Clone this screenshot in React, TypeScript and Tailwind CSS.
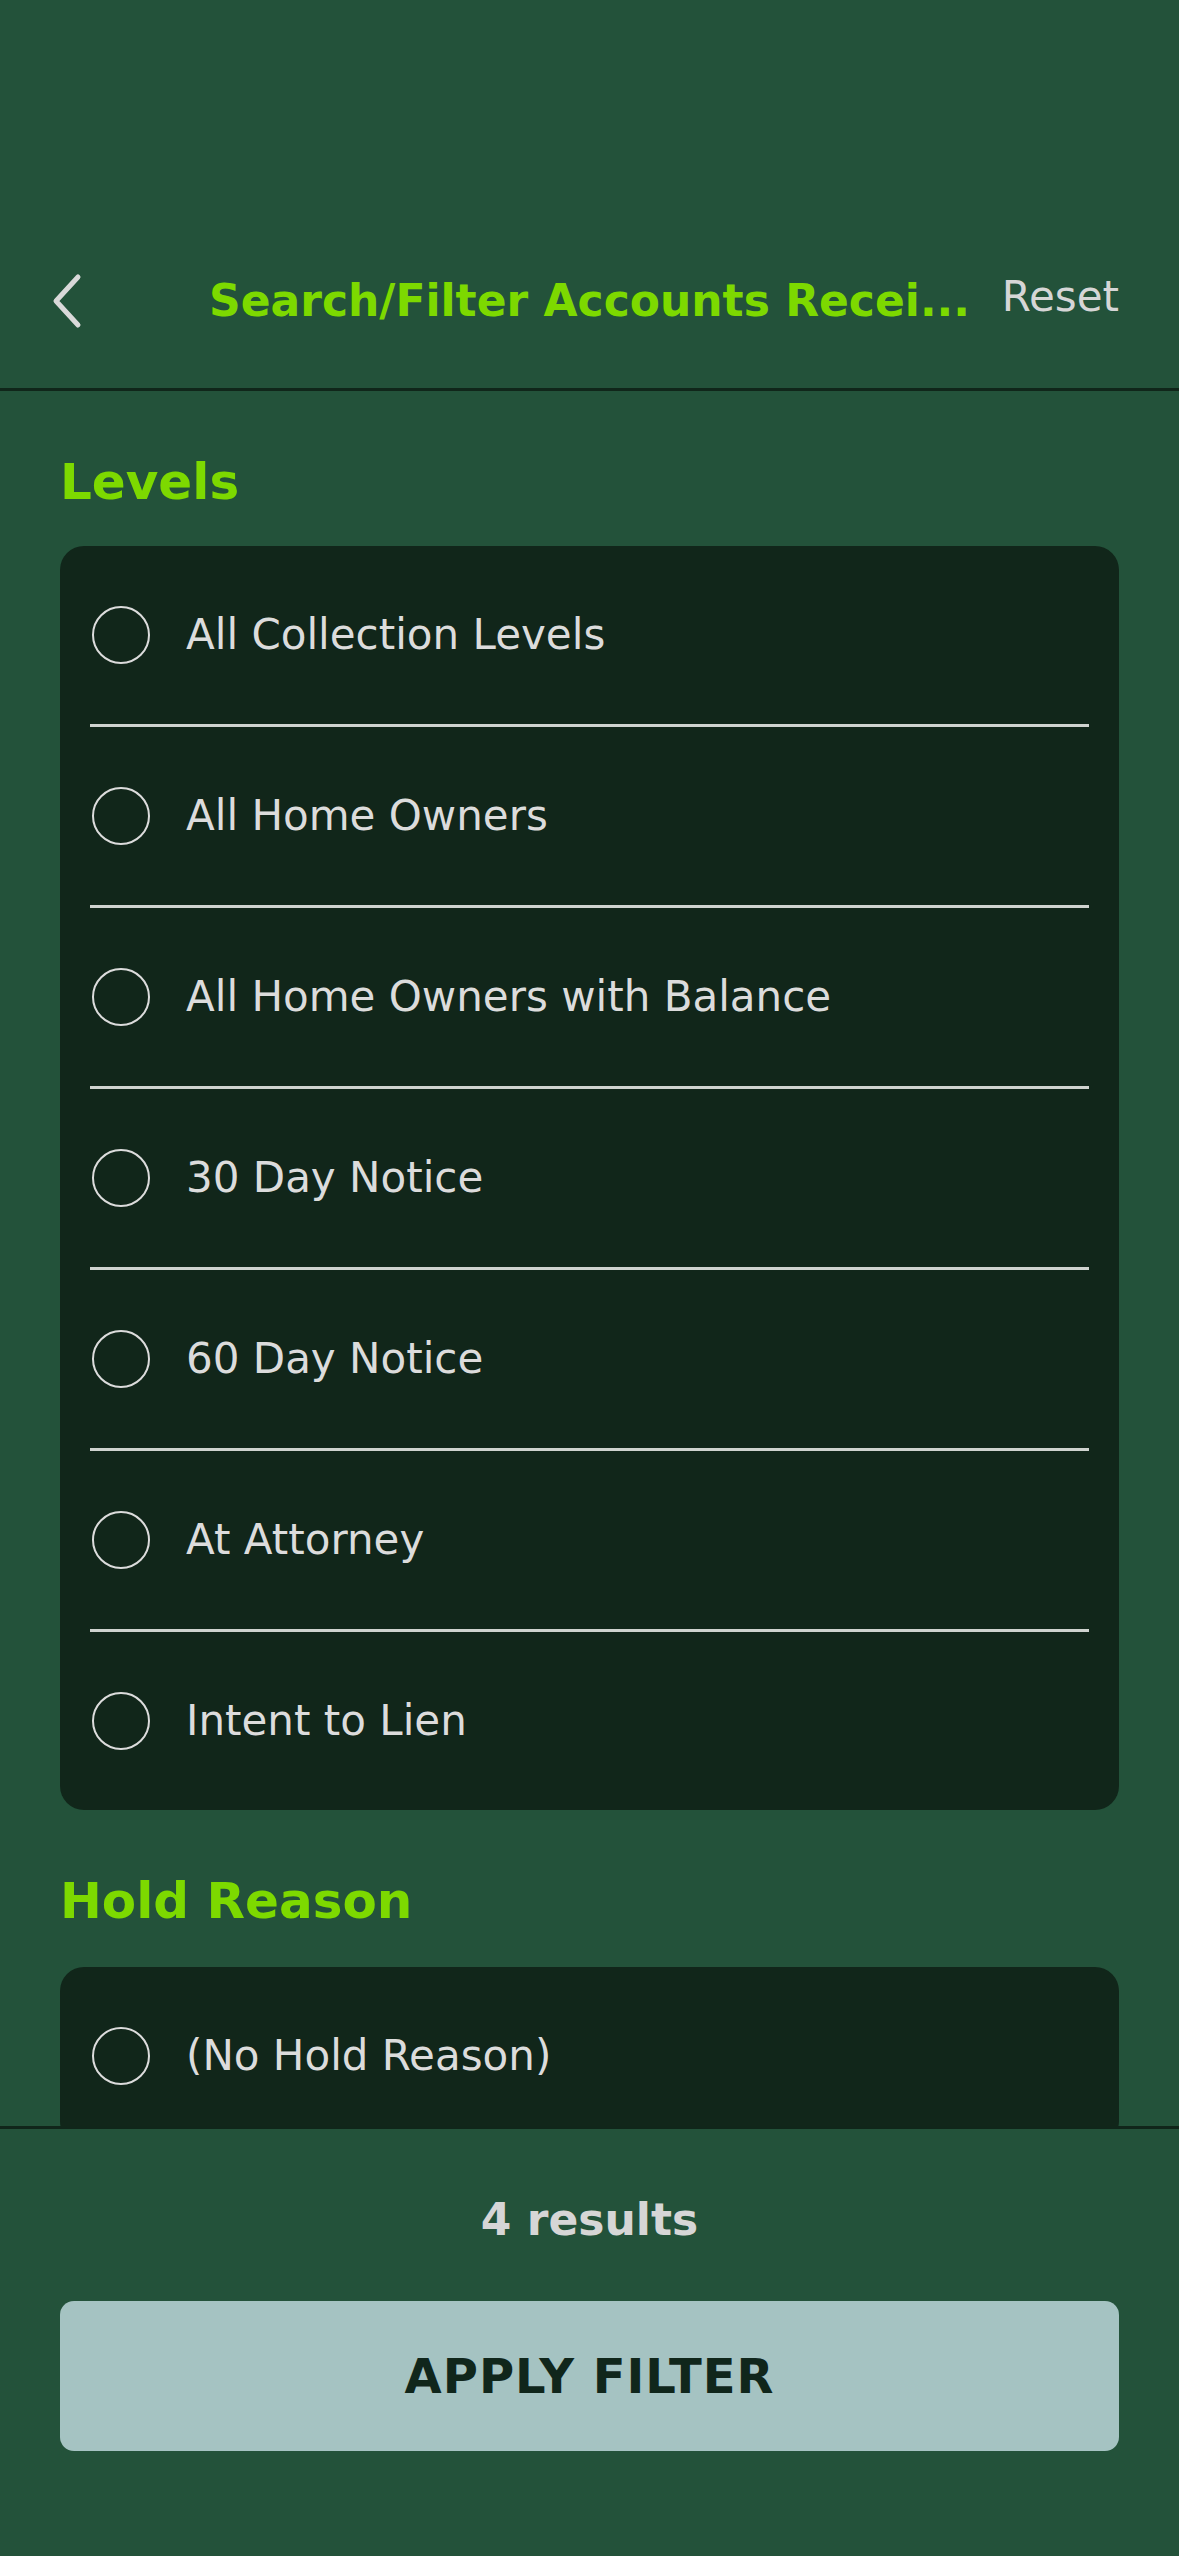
import { useState } from "react";

const levels = [
  "All Collection Levels",
  "All Home Owners",
  "All Home Owners with Balance",
  "30 Day Notice",
  "60 Day Notice",
  "At Attorney",
  "Intent to Lien",
];

const holdReasons = ["(No Hold Reason)"];

const Option = ({
  label,
  selected,
  onClick,
  last,
}: {
  label: string;
  selected: boolean;
  onClick: () => void;
  last: boolean;
}) => (
  <div>
    <button onClick={onClick} className="flex items-center w-full h-[178px] pl-[32px] text-left">
      <span className="flex items-center justify-center w-[58px] h-[58px] rounded-full border-2 border-[#dcdcdc] shrink-0">
        {selected && <span className="w-[34px] h-[34px] rounded-full bg-[#7dd900]" />}
      </span>
      <span className="ml-[36px] text-[42px] leading-none text-[#dcdcdc]">{label}</span>
    </button>
    {!last && <div className="mx-[30px] h-[3px] bg-[#cfd3cf]" />}
  </div>
);

const App = () => {
  const [level, setLevel] = useState<string | null>(null);
  const [hold, setHold] = useState<string | null>(null);

  return (
    <div className="h-[2556px] flex flex-col overflow-hidden bg-[#23523a] font-['DejaVu_Sans',sans-serif]">
      <header className="pt-[230px] border-b-[3px] border-[#10261a] shrink-0">
        <div className="flex items-center h-[158px] pb-[16px] pl-[52px] pr-[60px]">
          <button className="shrink-0">
            <svg width="30" height="56" viewBox="0 0 30 56" fill="none">
              <path d="M26 4 L4 28 L26 52" stroke="#d9d9d9" strokeWidth="5" strokeLinecap="round" strokeLinejoin="round" />
            </svg>
          </button>
          <h1 className="ml-[127px] text-[44px] font-bold leading-none text-[#7dd900] whitespace-nowrap">
            Search/Filter Accounts Recei...
          </h1>
          <button
            onClick={() => {
              setLevel(null);
              setHold(null);
            }}
            className="ml-auto pb-[8px] text-[42px] leading-none text-[#d6d6d6]"
          >
            Reset
          </button>
        </div>
      </header>

      <main className="flex-1 overflow-hidden px-[60px]">
        <h2 className="pt-[66px] text-[50px] font-bold leading-none text-[#7dd900]">Levels</h2>
        <div className="mt-[39px] rounded-[24px] bg-[#11261a]">
          {levels.map((l, i) => (
            <Option key={l} label={l} selected={level === l} onClick={() => setLevel(l)} last={i === levels.length - 1} />
          ))}
        </div>

        <h2 className="mt-[66px] text-[50px] font-bold leading-none text-[#7dd900]">Hold Reason</h2>
        <div className="mt-[41px] rounded-[24px] bg-[#11261a]">
          {holdReasons.map((h, i) => (
            <Option key={h} label={h} selected={hold === h} onClick={() => setHold(h)} last={i === holdReasons.length - 1} />
          ))}
        </div>
      </main>

      <footer className="shrink-0 border-t-[3px] border-[#10261a] pt-[69px] pb-[105px] px-[60px]">
        <p className="text-center text-[44px] font-bold leading-none text-[#d6d6d6]">4 results</p>
        <button className="mt-[59px] w-full h-[150px] rounded-[14px] bg-[#a5c3c2] flex items-center justify-center">
          <span className="text-[48px] font-bold leading-none tracking-[1px] text-[#10261b]">APPLY FILTER</span>
        </button>
      </footer>
    </div>
  );
};

export default App;
